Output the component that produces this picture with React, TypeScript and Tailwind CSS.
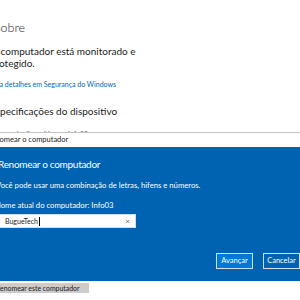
import React from 'react';

export default function App() {
  return (
    <div className="relative w-[300px] h-[300px] overflow-hidden bg-white text-[#1b1b1b] font-['Lato',sans-serif]">
      {/* settings page behind the dialog */}
      <div className="flex flex-col">
        <h1 className="mt-[19px] -ml-[6px] text-[12.5px] leading-[17px] font-light">Sobre</h1>
        <p className="mt-[9px] -ml-[10px] text-[10px] leading-[12px]">
          O computador está monitorado e
          <br />
          protegido.
        </p>
        <a className="mt-[10px] -ml-[10px] text-[7px] leading-[10px] text-[#0067b8]">Veja detalhes em Segurança do Windows</a>
        <h2 className="mt-[15px] -ml-[10px] text-[10px] leading-[14px]">Especificações do dispositivo</h2>
        <div className="mt-[11px] -ml-[6px] text-[7px] leading-[10px] text-[#555]">Nome do dispositivo&nbsp;&nbsp;&nbsp;&nbsp;&nbsp;&nbsp;Info03</div>
        <div className="mt-[144px] w-[89px] h-[10px] bg-[#cccccc] flex items-center overflow-hidden">
          <span className="-ml-[4px] text-[6.9px] leading-[10px] whitespace-nowrap">Renomear este computador</span>
        </div>
      </div>

      {/* rename dialog */}
      <div className="absolute left-0 right-0 top-[132px] flex flex-col">
        <div className="h-[15px] bg-white border-t border-[#c4c4c4] flex items-center">
          <span className="-ml-[13px] text-[7.5px] leading-[10px]">Renomear o computador</span>
        </div>
        <div className="h-[134px] bg-[#0063b1] text-white flex flex-col">
          <div className="mt-[10px] -ml-[2px] text-[10px] leading-[15px] tracking-[-0.3px]">Renomear o computador</div>
          <div className="mt-[8px] -ml-[4px] text-[7.7px] leading-[10px]">Você pode usar uma combinação de letras, hifens e números.</div>
          <div className="mt-[10px] -ml-[5px] text-[7.7px] leading-[10px]">Nome atual do computador: Info03</div>
          <div className="mt-[4px] -ml-[4px] w-[140px] h-[14px] bg-white border border-[#cfe0f2] flex items-center text-[#1b1b1b] text-[7px]">
            <span className="pl-[8px]">BugueTech</span>
            <span className="ml-px w-px h-[9px] bg-black" />
            <span className="ml-auto mr-[5px] text-[8px] leading-[8px] text-[#666]">×</span>
          </div>
          <div className="mt-[25px] flex gap-[10px] pl-[216px]">
            <button className="w-[44px] h-[16px] bg-[#0078d7] border border-[#cde0f2] text-[7.5px] leading-[14px] text-white">Avançar</button>
            <button className="w-[44px] h-[16px] bg-[#0063b1] border border-[#cde0f2] text-[7.5px] leading-[14px] text-white">Cancelar</button>
          </div>
        </div>
      </div>
    </div>
  );
}
